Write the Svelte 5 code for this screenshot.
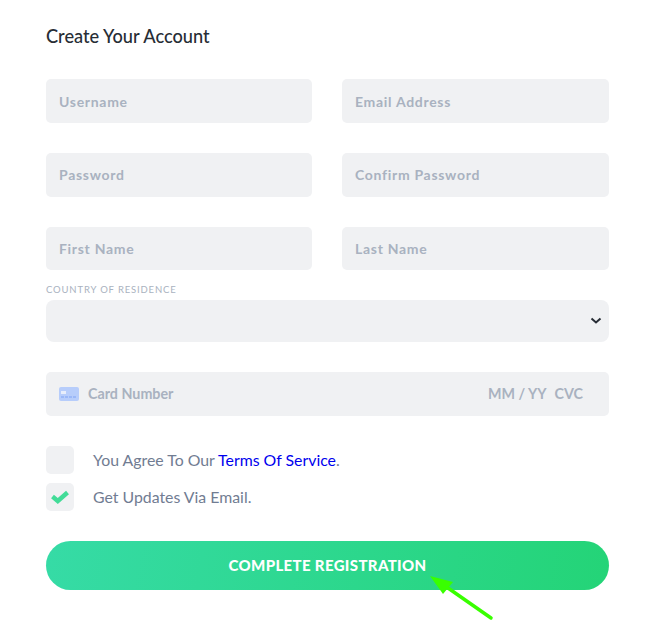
<script>
  const rows = [
    ['Username', 'Email Address'],
    ['Password', 'Confirm Password'],
    ['First Name', 'Last Name']
  ]
</script>

<div class="page">
  <h2 class="title">Create Your Account</h2>

  <form class="form" onsubmit={(e) => e.preventDefault()}>
    <div class="fields">
      {#each rows as row}
        {#each row as name}
          <input class="field" type="text" placeholder={name} />
        {/each}
      {/each}
    </div>

    <label class="country">
      <span class="label">Country of residence</span>
      <span class="select-wrap">
        <select class="field select"><option></option></select>
        <svg class="chevron" width="12" height="8" viewBox="0 0 12 8">
          <path d="M1.5 1.5 6 5.5 10.5 1.5" fill="none" stroke="#272d35" stroke-width="2" />
        </svg>
      </span>
    </label>

    <div class="card">
      <svg class="card-icon" width="20" height="14" viewBox="0 0 20 14">
        <rect width="20" height="14" rx="2" fill="#b7cdfb" />
        <rect x="2" y="4" width="5" height="3" fill="#e8eefb" />
        <path d="M2 10h16" stroke="#7ea3f5" stroke-width="1" stroke-dasharray="3 1" />
      </svg>
      <span class="card-number">Card Number</span>
      <span class="card-date">MM / YY</span>
      <span class="card-cvc">CVC</span>
    </div>

    <div class="checks">
      <label class="check">
        <span class="box"></span>
        <span>You Agree To Our <a href="#terms">Terms Of Service</a>.</span>
      </label>
      <label class="check">
        <span class="box">
          <svg width="18" height="14" viewBox="0 0 18 14">
            <path d="M1.5 6.5 6.8 11 16.5 2.5" fill="none" stroke="#42dc98" stroke-width="4.4" />
          </svg>
        </span>
        <span>Get Updates Via Email.</span>
      </label>
    </div>

    <button class="submit" type="submit">Complete Registration</button>
  </form>

  <svg class="arrow" width="70" height="52" viewBox="0 0 70 52">
    <path d="M61 46 18 16" stroke="#39ff00" stroke-width="3.5" stroke-linecap="round" />
    <path d="M0 4 23 10 13 22Z" fill="#39ff00" />
  </svg>
</div>

<style>
  :global(body) {
    margin: 0;
    background: #fff;
  }

  .page {
    position: relative;
    box-sizing: border-box;
    width: 646px;
    height: 630px;
    padding: 26px 37px 0 46px;
    font-family: Lato, "Liberation Sans", sans-serif;
    overflow: hidden;
  }

  .title {
    margin: 0 0 32.4px;
    font-size: 18.2px;
    line-height: 21px;
    font-weight: 500;
    color: #272d35;
  }

  .fields {
    display: grid;
    grid-template-columns: 266px 267px;
    column-gap: 30px;
    row-gap: 30px;
  }

  .field {
    box-sizing: border-box;
    width: 100%;
    height: 43.6px;
    padding: 0 13px;
    border: none;
    border-radius: 5px;
    background: #f0f1f3;
    font-family: inherit;
    font-size: 14px;
    font-weight: 700;
    letter-spacing: 0.7px;
    color: #5e6b82;
  }

  .field::placeholder {
    color: #a9b2c0;
    opacity: 1;
  }

  .country {
    display: block;
    margin-top: 13.8px;
  }

  .label {
    display: block;
    margin-bottom: 5px;
    font-size: 9.5px;
    line-height: 11px;
    font-weight: 400;
    letter-spacing: 0.85px;
    text-transform: uppercase;
    color: #a9b2c0;
  }

  .select-wrap {
    position: relative;
    display: block;
  }

  .select {
    display: block;
    height: 42px;
    border-radius: 8px;
    appearance: none;
    color: #272d35;
  }

  .chevron {
    position: absolute;
    right: 7px;
    top: 17px;
    pointer-events: none;
  }

  .card {
    display: flex;
    align-items: center;
    height: 44px;
    margin-top: 30px;
    padding: 0 26px 0 13px;
    border-radius: 5px;
    background: #f0f1f3;
    font-size: 14.3px;
    font-weight: 700;
    color: #a9b2c0;
  }

  .card-icon {
    margin-right: 9px;
  }

  .card-date {
    margin-left: auto;
  }

  .card-cvc {
    margin-left: 8px;
  }

  .checks {
    display: flex;
    flex-direction: column;
    gap: 9px;
    margin-top: 30px;
  }

  .check {
    display: flex;
    align-items: center;
    gap: 19px;
    font-size: 15.85px;
    color: #717c92;
  }

  .box {
    display: flex;
    align-items: center;
    justify-content: center;
    width: 28px;
    height: 28px;
    border-radius: 5px;
    background: #f0f1f3;
  }

  .check a {
    color: #0000ee;
    text-decoration: none;
  }

  .submit {
    display: block;
    width: 100%;
    height: 49px;
    margin-top: 30px;
    border: none;
    border-radius: 25px;
    background: linear-gradient(100deg, #36dba6, #24d477);
    font-family: inherit;
    font-size: 15px;
    font-weight: 900;
    letter-spacing: 0.35px;
    text-transform: uppercase;
    color: #fff;
  }

  .arrow {
    position: absolute;
    left: 430px;
    top: 572px;
  }
</style>
